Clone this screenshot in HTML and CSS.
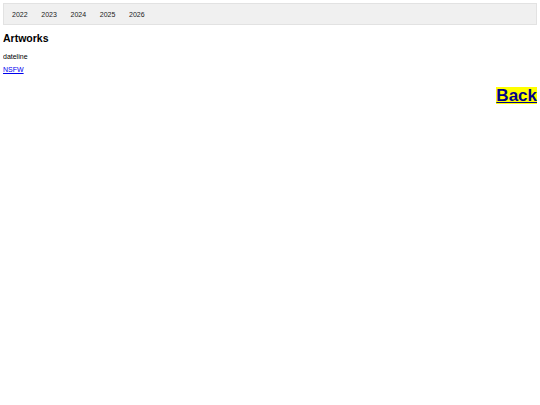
FILE: index.html
```html
<!DOCTYPE html>
<html>
<head>
<meta charset="utf-8">
<link rel="stylesheet" href="styles.css">
</head>
<body>
<nav class="years">
  <a href="#">2022</a>
  <a href="#">2023</a>
  <a href="#">2024</a>
  <a href="#">2025</a>
  <a href="#">2026</a>
</nav>
<h2 class="title">Artworks</h2>
<p class="dateline">dateline</p>
<p class="nsfw"><a href="#">NSFW</a></p>
<div class="back-row"><a class="back" href="#">Back</a></div>
</body>
</html>
```

FILE: styles.css
```css
body {
  margin: 3px;
  font-family: "Liberation Sans", Arial, sans-serif;
  color: #000;
}
.years {
  display: flex;
  align-items: center;
  gap: 13.7px;
  height: 20px;
  padding: 0 8px;
  background: #f0f0f0;
  border: 1px solid #e2e2e2;
}
.years a {
  font-size: 7px;
  color: #1a1a1a;
  text-decoration: none;
}
.title {
  font-size: 10.5px;
  font-weight: bold;
  margin: 7px 0 0;
  line-height: 13px;
}
.dateline {
  font-size: 7px;
  margin: 7px 0 0;
  line-height: 9px;
}
.nsfw {
  font-size: 7px;
  margin: 4px 0 0;
  line-height: 9px;
}
.nsfw a {
  color: #00e;
}
.back-row {
  display: flex;
  justify-content: flex-end;
  margin-top: 13px;
}
.back {
  font-size: 17px;
  font-weight: bold;
  line-height: 17px;
  background: #ffff00;
  color: #00008b;
}
```
